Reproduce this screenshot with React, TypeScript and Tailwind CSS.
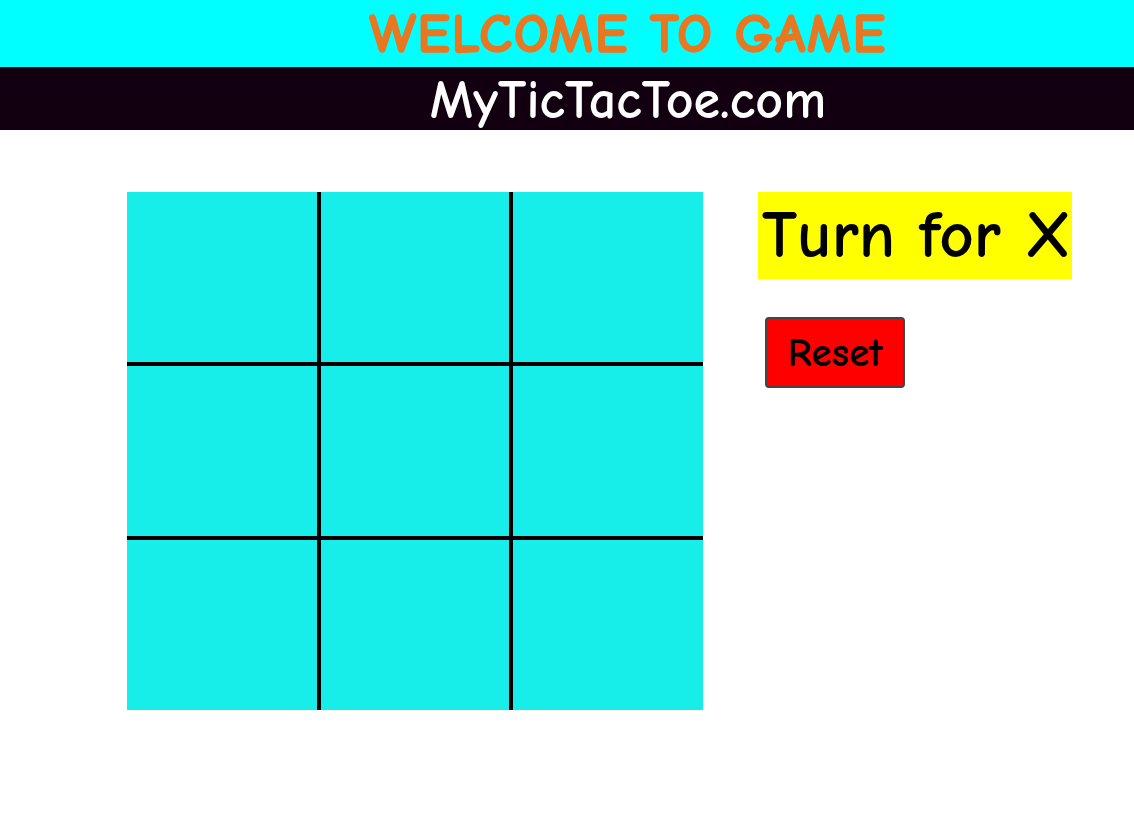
import React, { useState } from 'react';

const font = { fontFamily: '"Comic Sans MS", "Comic Neue", "Open Sans", sans-serif' };

export default function App() {
  const [cells, setCells] = useState<string[]>(Array(9).fill(''));
  const [turn, setTurn] = useState('X');

  const play = (i: number) => {
    if (cells[i]) return;
    const next = [...cells];
    next[i] = turn;
    setCells(next);
    setTurn(turn === 'X' ? 'O' : 'X');
  };

  const reset = () => {
    setCells(Array(9).fill(''));
    setTurn('X');
  };

  return (
    <div className="min-h-screen bg-white" style={font}>
      <div className="h-[67px] bg-[#00ffff] pl-[122px] flex items-center justify-center">
        <h1 className="text-[55px] font-bold text-[#e87722] leading-none tracking-[1.5px] pt-[2px] [-webkit-text-stroke:1.5px_#e87722]">
          WELCOME TO GAME
        </h1>
      </div>
      <div className="h-[63px] bg-[#120010] pl-[122px] flex items-center justify-center">
        <h2 className="text-[54px] font-bold text-white leading-none pt-[4px]">MyTicTacToe.com</h2>
      </div>

      <div className="flex pl-[127px] pt-[62px] gap-[55px]">
        <div className="grid grid-cols-[190px_188px_190px] grid-rows-[170px_170px_170px] gap-[4px] bg-black">
          {cells.map((c, i) => (
            <button
              key={i}
              onClick={() => play(i)}
              className="bg-[#17eeea] text-black text-[80px] leading-none cursor-pointer"
            >
              {c}
            </button>
          ))}
        </div>

        <div className="flex flex-col items-start">
          <div className="bg-[#ffff00] h-[87px] w-[314px] flex items-center pl-[4px] overflow-hidden">
            <span className="text-[67px] font-bold leading-none text-black whitespace-nowrap">Turn for {turn}</span>
          </div>
          <button
            onClick={reset}
            className="mt-[38px] ml-[7px] w-[140px] h-[71px] bg-[#ff0000] border-2 border-[#444] rounded-[4px] text-[41px] font-bold text-black cursor-pointer leading-none"
          >
            Reset
          </button>
        </div>
      </div>
    </div>
  );
}
